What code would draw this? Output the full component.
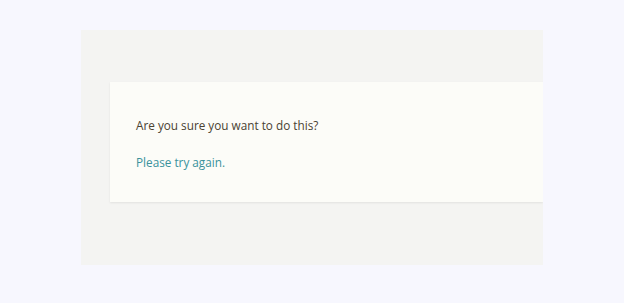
export default function App() {
  return (
    <div className="min-h-screen w-full bg-[#f7f7fe] pt-[30px] pl-[81px] font-['Open_Sans',sans-serif]">
      <div className="w-[462px] h-[235px] bg-[#f4f4f2] pt-[52px] pl-[29px] overflow-hidden">
        <div className="h-[120px] w-full bg-[#fcfcf8] shadow-[0_1px_2px_rgba(0,0,0,0.08)] pt-[35px] pl-[26px] text-[11.75px] leading-[16px]">
          <p className="text-[#4a4232]">Are you sure you want to do this?</p>
          <p className="mt-[21px] text-[#3a929c]">Please try again.</p>
        </div>
      </div>
    </div>
  );
}
